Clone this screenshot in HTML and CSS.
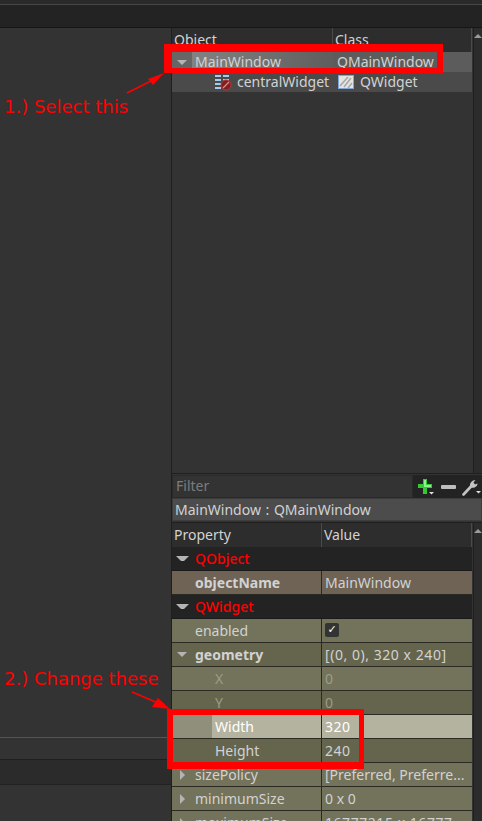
FILE: index.html
```html
<!DOCTYPE html>
<html lang="en">

<head>
    <meta charset="UTF-8" />
    <meta name="viewport" content="width=device-width, initial-scale=1.0" />
    <title>Qt Designer - resize window</title>
    <link rel="stylesheet" href="styles.css">
</head>

<body>
    <div class="top-strip"></div>
    <div class="toolbar"></div>

    <div class="workspace">
        <div class="left-pane">
            <div class="left-empty"></div>
            <div class="left-tabs"></div>
            <div class="left-header"></div>
            <div class="left-bottom"></div>
        </div>

        <div class="right-pane">
            <section class="inspector">
                <div class="tree">
                    <div class="head-row object-cols">
                        <span class="head-cell">Object</span>
                        <span class="head-cell">Class</span>
                    </div>
                    <div class="object-row object-cols selected-row">
                        <div class="object-name">
                            <span class="branch"><span class="tri-down"></span></span>
                            <span class="object-label">MainWindow</span>
                        </div>
                        <div class="object-class">QMainWindow</div>
                    </div>
                    <div class="object-row object-cols child-row">
                        <div class="object-name child-name">
                            <svg class="tree-icon" width="17" height="17" viewBox="0 0 17 17">
                                <path d="M0 1h6v2H0zM8 1h6v2H8zM0 5h6v2H0zM8 5h6v2H8zM0 9h6v2H0zM0 13h6v2H0z" fill="#a4cbee" />
                                <circle cx="11" cy="11" r="5" fill="#7f2020" stroke="#b83434" />
                                <path d="M8 14l6-6" stroke="#d98e8e" stroke-width="1.200" />
                            </svg>
                            <span>centralWidget</span>
                        </div>
                        <div class="object-class class-with-icon">
                            <svg width="16" height="16" viewBox="0 0 16 16">
                                <rect x="0.500" y="1.500" width="15" height="13" fill="#e4e4e4" stroke="#7fa6d6" />
                                <path d="M2 12l8-9M6 13l7-9M10 14l4-5" stroke="#a8a8a8" stroke-width="1.600" />
                            </svg>
                            <span>QWidget</span>
                        </div>
                    </div>
                </div>
                <div class="scrollbar">
                    <span class="scroll-up"></span>
                </div>
            </section>

            <div class="filter-bar">
                <div class="filter-input">Filter</div>
                <div class="filter-tools">
                    <svg width="18" height="18" viewBox="0 0 18 18">
                        <path d="M6 1h4v5h5v4h-5v6H6v-6H1V6h5z" fill="#34c934" />
                        <path d="M7 2h2v5h5v2H7z" fill="#8ff08f" />
                        <path d="M12 14h5l-2.500 2.500z" fill="#e0e0e0" />
                    </svg>
                    <span class="minus"></span>
                    <svg width="20" height="18" viewBox="0 0 20 18">
                        <path d="M1.500 16.500L9 8.500" stroke="#c4c4c4" stroke-width="2.600" stroke-linecap="round" />
                        <path d="M8 8.500C7.500 5 10 2 13.500 2l-2 2.500 1.500 2 2.500-1C15.500 8.500 12 10.500 9.500 9.500z" fill="#c4c4c4" />
                        <path d="M14 13h5l-2.500 2.500z" fill="#e0e0e0" />
                    </svg>
                </div>
            </div>

            <div class="object-title">MainWindow : QMainWindow</div>

            <section class="inspector props">
                <div class="prop-table">
                    <div class="head-row prop-cols">
                        <span class="head-cell">Property</span>
                        <span class="head-cell">Value</span>
                    </div>

                    <div class="group-row"><span class="branch"><span class="tri-down"></span></span><span>QObject</span></div>
                    <div class="prop-row prop-cols name-row">
                        <div class="prop-name"><span class="branch"></span><b>objectName</b></div>
                        <div class="prop-value">MainWindow</div>
                    </div>

                    <div class="group-row"><span class="branch"><span class="tri-down"></span></span><span>QWidget</span></div>
                    <div class="prop-row prop-cols light">
                        <div class="prop-name"><span class="branch"></span>enabled</div>
                        <div class="prop-value"><span class="checkbox">✓</span></div>
                    </div>
                    <div class="prop-row prop-cols dark">
                        <div class="prop-name"><span class="branch"><span class="tri-down"></span></span><b>geometry</b></div>
                        <div class="prop-value num">[(0, 0), 320 x 240]</div>
                    </div>
                    <div class="prop-row prop-cols light off">
                        <div class="prop-name sub">X</div>
                        <div class="prop-value">0</div>
                    </div>
                    <div class="prop-row prop-cols dark off">
                        <div class="prop-name sub">Y</div>
                        <div class="prop-value">0</div>
                    </div>
                    <div class="prop-row prop-cols current">
                        <div class="prop-name sub">Width</div>
                        <div class="prop-value num">320</div>
                    </div>
                    <div class="prop-row prop-cols dark">
                        <div class="prop-name sub">Height</div>
                        <div class="prop-value num">240</div>
                    </div>
                    <div class="prop-row prop-cols light">
                        <div class="prop-name"><span class="branch"><span class="tri-right"></span></span>sizePolicy</div>
                        <div class="prop-value">[Preferred, Preferre...</div>
                    </div>
                    <div class="prop-row prop-cols light">
                        <div class="prop-name"><span class="branch"><span class="tri-right"></span></span>minimumSize</div>
                        <div class="prop-value">0 x 0</div>
                    </div>
                    <div class="prop-row prop-cols light">
                        <div class="prop-name"><span class="branch"><span class="tri-right"></span></span>maximumSize</div>
                        <div class="prop-value num">16777215 x 16777...</div>
                    </div>
                </div>
                <div class="scrollbar">
                    <span class="scroll-up"></span>
                </div>
            </section>
        </div>
    </div>

    <!-- red markup drawn on top of the screenshot -->
    <div class="note note-one">1.) Select this</div>
    <div class="note note-two">2.) Change these</div>
    <div class="mark mark-one"></div>
    <div class="mark mark-two"></div>
    <svg class="arrows" width="482" height="821" viewBox="0 0 482 821">
        <path d="M127 93L155 79" stroke="#f00" stroke-width="1.500" />
        <path d="M164 73L148 79L153 85z" fill="#f00" />
        <path d="M132 692L158 703" stroke="#f00" stroke-width="1.500" />
        <path d="M170 709L152 707L158 698z" fill="#f00" />
    </svg>
</body>

</html>
```
FILE: styles.css
```css
:root {
    --pane-bg: #333333;
    --bar-bg: #232323;
    --line: #1d1d1d;
    --text-light: #d2d2d2;
    --row-light: #73735b;
    --row-dark: #65654e;
    --annotation: #ff0000;
}

* {
    box-sizing: border-box;
}

html,
body {
    margin: 0;
    padding: 0;
    height: 100%;
    overflow: hidden;
}

body {
    position: relative;
    display: flex;
    flex-direction: column;
    width: 482px;
    height: 821px;
    background: var(--pane-bg);
    color: var(--text-light);
    font-family: "Noto Sans", sans-serif;
    font-size: 14px;
}

.top-strip {
    height: 5px;
    background: #2a2a2a;
    border-bottom: 1px solid #484848;
}

.toolbar {
    height: 23px;
    background: var(--bar-bg);
    border-bottom: 1px solid #161616;
}

.workspace {
    flex: 1;
    display: flex;
    min-height: 0;
}

/* left side */
.left-pane {
    width: 171px;
    display: flex;
    flex-direction: column;
}

.left-empty {
    height: 709px;
    background: var(--pane-bg);
}

.left-tabs {
    height: 23px;
    border-top: 1px solid #555555;
    border-bottom: 1px solid #1f1f1f;
    background: var(--pane-bg);
}

.left-header {
    height: 25px;
    background: #2b2b2b;
    border-bottom: 1px solid #222222;
}

.left-bottom {
    flex: 1;
    background: var(--pane-bg);
}

/* right side */
.right-pane {
    width: 311px;
    display: flex;
    flex-direction: column;
    border-left: 1px solid #1f1f1f;
}

.inspector {
    display: flex;
    height: 446px;
    border-bottom: 1px solid #1f1f1f;
}

.inspector.props {
    flex: 1;
    min-height: 0;
    margin-top: 1px;
    border-bottom: none;
    border-top: 1px solid #1f1f1f;
}

.tree,
.prop-table {
    flex: 1;
    min-width: 0;
}

.scrollbar {
    width: 9px;
    margin-left: 1px;
    background: #2c2c2c;
    border-left: 1px solid #1f1f1f;
}

.scroll-up {
    display: block;
    width: 0;
    margin: 6px 0 0 0;
    border-left: 4px solid transparent;
    border-right: 4px solid transparent;
    border-bottom: 4px solid #9a9a9a;
}

.head-row {
    height: 24px;
    background: #2d2d2d;
}

.head-cell {
    display: block;
    line-height: 23px;
    padding-left: 2px;
    border-right: 1px solid #4a4a4a;
}

.object-cols {
    display: grid;
    grid-template-columns: 161px 1fr;
}

.prop-cols {
    display: grid;
    grid-template-columns: 150px 1fr;
}

.branch {
    display: flex;
    flex: none;
    align-items: center;
    justify-content: center;
    width: 20px;
    height: 100%;
}

.tri-down {
    width: 0;
    border-left: 5px solid transparent;
    border-right: 5px solid transparent;
    border-top: 5px solid #b4b4b4;
}

.tri-right {
    width: 0;
    border-top: 5px solid transparent;
    border-bottom: 5px solid transparent;
    border-left: 5px solid #b4b4b4;
}

/* object tree */
.object-row {
    height: 20px;
    line-height: 20px;
}

.object-name {
    display: flex;
    align-items: center;
}

.selected-row {
    background: #5c5c5c;
}

.selected-row .branch {
    background: #666666;
}

.object-label {
    flex: 1;
    height: 100%;
    padding-left: 3px;
    background: linear-gradient(to right, #828282, #5e5e5e);
}

.object-class {
    padding-left: 4px;
}

.child-row {
    background: #4a4a4a;
}

.child-name {
    padding-left: 43px;
}

.tree-icon {
    margin-right: 5px;
}

.class-with-icon {
    display: flex;
    align-items: center;
    gap: 6px;
    padding-left: 5px;
}

/* filter */
.filter-bar {
    display: flex;
    height: 23px;
    margin-top: 1px;
}

.filter-input {
    width: 242px;
    padding-left: 3px;
    line-height: 20px;
    background: #333333;
    color: #7c7c7c;
    border: 1px solid #2a2a2a;
}

.filter-tools {
    flex: 1;
    display: flex;
    align-items: center;
    gap: 6px;
    padding-left: 4px;
    background: var(--bar-bg);
}

.minus {
    width: 15px;
    height: 4px;
    border-radius: 1px;
    background: #bdbdbd;
}

.object-title {
    height: 23px;
    padding-left: 2px;
    line-height: 22px;
    word-spacing: 1px;
    background: #4c4c4c;
    border: 1px solid #3c3c3c;
}

/* property table */
.group-row {
    display: flex;
    align-items: center;
    height: 24px;
    background: var(--bar-bg);
    color: var(--annotation);
    font-weight: 500;
    border-bottom: 1px solid #1a1a1a;
}

.group-row span:last-child {
    padding-left: 3px;
}

.prop-row {
    height: 24px;
    line-height: 23px;
    border-bottom: 1px solid #2a2a22;
}

.prop-name {
    display: flex;
    align-items: center;
    border-right: 1px solid #2a2a22;
}

.prop-name b {
    font-weight: 700;
}

.prop-name .branch {
    margin-right: 3px;
}

.prop-name.sub {
    padding-left: 43px;
}

.prop-value {
    padding-left: 3px;
    white-space: nowrap;
    overflow: hidden;
}

.num {
    letter-spacing: 0.55px;
}

.name-row {
    background: #6e6354;
}

.light {
    background: var(--row-light);
}

.dark {
    background: var(--row-dark);
}

.off {
    color: #9c9c86;
}

.current {
    background: #b3b3a0;
    color: #ffffff;
}

.current .prop-name {
    background: linear-gradient(to right, #8f8f7b 40px, #b3b3a0 40px);
}

.checkbox {
    display: inline-block;
    width: 14px;
    height: 14px;
    margin-top: 4px;
    background: #333333;
    border-radius: 2px;
    color: #ffffff;
    font-family: "DejaVu Sans", sans-serif;
    font-size: 11px;
    line-height: 14px;
    text-align: center;
    vertical-align: top;
}

/* red markup */
.note {
    position: absolute;
    left: 4px;
    color: var(--annotation);
    font-family: "DejaVu Sans", sans-serif;
    font-size: 18px;
    line-height: 20px;
    white-space: nowrap;
}

.note-one {
    top: 97px;
}

.note-two {
    top: 669px;
}

.mark {
    position: absolute;
    border-style: solid;
    border-color: var(--annotation);
}

.mark-one {
    left: 164px;
    top: 44px;
    width: 279px;
    height: 29px;
    border-width: 8px 6px 5px 8px;
}

.mark-two {
    left: 167px;
    top: 709px;
    width: 197px;
    height: 60px;
    border-width: 6px 5px 7px 6px;
}

.arrows {
    position: absolute;
    left: 0;
    top: 0;
    pointer-events: none;
}
```
